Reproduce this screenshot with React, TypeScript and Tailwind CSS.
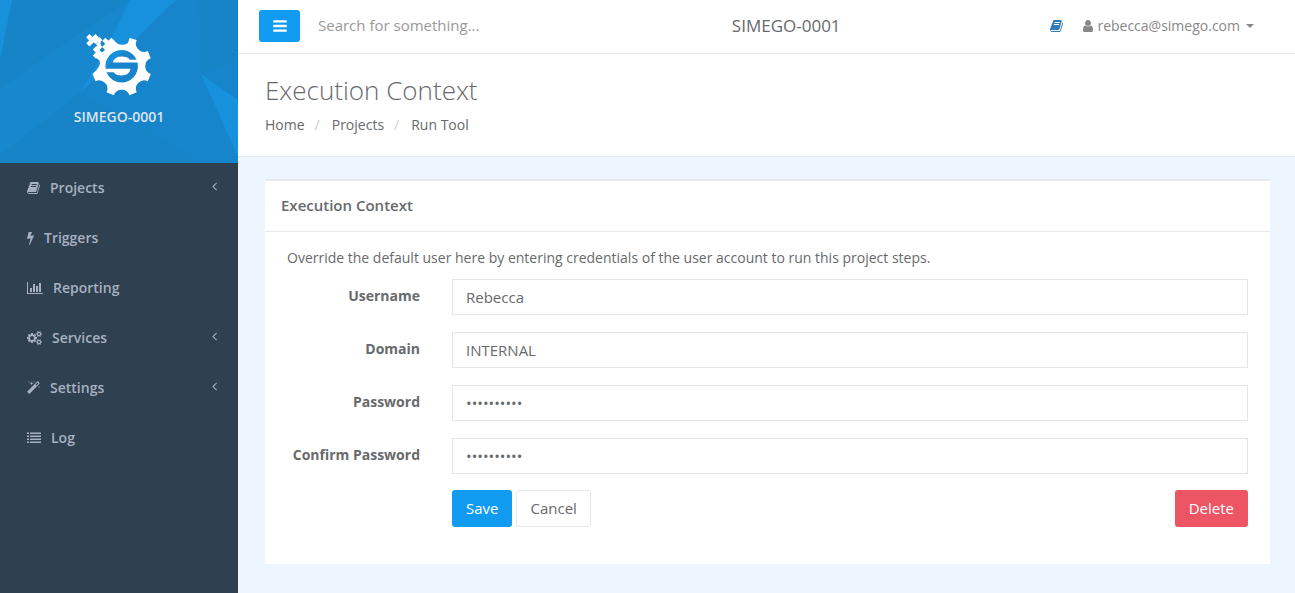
import { useState } from "react";
import type { ReactNode } from "react";

// Icon outlines, drawn on a 1792 unit grid
const BOOK =
  "M1639 478q40 57 18 129l-275 906q-19 64-76.5 107.5t-122.5 43.5h-923q-77 0-148.5-53.5t-99.5-131.5q-24-67-2-127 0-4 3-27t4-37q1-8-3-21.5t-3-19.5q2-11 8-21t16.5-23.5 16.5-23.5q23-38 45-91.5t30-91.5q3-10 .5-30t-.5-28q3-11 17-28t17-23q21-36 42-92t25-90q1-9-2.5-32t.5-28q4-13 22-30.5t22-22.5q19-26 42.5-84.5t27.5-96.5q1-8-3-25.5t-2-26.5q2-8 9-18t18-23 17-21q8-12 16.5-30.5t15-35 16-36 19.5-32 26.5-23.5 36-11.5 47.5 5.5l-1 3q38-9 51-9h761q74 0 114 56t18 130l-274 906q-36 119-71.5 153.5t-128.5 34.5h-869q-27 0-38 15-11 16-1 43 24 70 144 70h923q29 0 56-15.5t35-41.5l300-987q7-22 5-57 38 15 59 43zm-1064 2q-4 13 2 22.5t20 9.5h608q13 0 25.5-9.5t16.5-22.5l21-64q4-13-2-22.5t-20-9.5h-608q-13 0-25.5 9.5t-16.5 22.5zm-83 256q-4 13 2 22.5t20 9.5h608q13 0 25.5-9.5t16.5-22.5l21-64q4-13-2-22.5t-20-9.5h-608q-13 0-25.5 9.5t-16.5 22.5z";
const BOLT =
  "M1333 566q18 20 7 44l-540 1157q-13 25-42 25-4 0-14-2-17-5-25.5-19t-4.5-30l197-808-406 101q-4 1-12 1-18 0-31-11-18-15-13-39l201-825q4-14 16-23t28-9h328q19 0 32 12.5t13 29.5q0 8-5 18l-171 463 396-98q8-2 12-2 19 0 34 15z";
const CHART =
  "M640 896v512h-256v-512h256zm384-512v1024h-256v-1024h256zm1024 1152v128h-2048v-1536h128v1408h1920zm-640-896v768h-256v-768h256zm384-384v1152h-256v-1152h256z";
const COGS =
  "M896 896q0-106-75-181t-181-75-181 75-75 181 75 181 181 75 181-75 75-181zm768 512q0-52-38-90t-90-38-90 38-38 90q0 53 37.5 90.5t90.5 37.5 90.5-37.5 37.5-90.5zm0-1024q0-52-38-90t-90-38-90 38-38 90q0 53 37.5 90.5t90.5 37.5 90.5-37.5 37.5-90.5zm-384 421v185q0 10-7 19.5t-16 10.5l-155 24q-11 35-32 76 34 48 90 115 7 11 7 20 0 12-7 19-23 30-82.5 89.5t-78.5 59.5q-11 0-21-7l-115-90q-37 19-77 31-11 108-23 155-7 24-30 24h-186q-11 0-20-7.5t-10-17.5l-23-153q-34-10-75-31l-118 89q-7 7-20 7-11 0-21-8-144-133-144-160 0-9 7-19 10-14 41-53t47-61q-23-44-35-82l-152-24q-10-1-17-9.5t-7-19.5v-185q0-10 7-19.5t16-10.5l155-24q11-35 32-76-34-48-90-115-7-11-7-20 0-12 7-20 22-30 82-89t79-59q11 0 21 7l115 90q34-18 77-32 11-108 23-154 7-24 30-24h186q11 0 20 7.5t10 17.5l23 153q34 10 75 31l118-89q8-7 20-7 11 0 21 8 144 133 144 160 0 9-7 19-12 16-42 54t-45 60q23 48 34 82l152 23q10 2 17 10.5t7 19.5zm640 533v140q0 16-149 31-12 27-30 52 51 113 51 138 0 4-4 7-122 71-124 71-8 0-46-47t-52-68q-20 2-30 2t-30-2q-14 21-52 68t-46 47q-2 0-124-71-4-3-4-7 0-25 51-138-18-25-30-52-149-15-149-31v-140q0-16 149-31 13-29 30-52-51-113-51-138 0-4 4-7 4-2 35-20t59-34 30-16q8 0 46 46.5t52 67.5q20-2 30-2t30 2q51-71 92-112l6-2q4 0 124 70 4 3 4 7 0 25-51 138 17 23 30 52 149 15 149 31zm0-1024v140q0 16-149 31-12 27-30 52 51 113 51 138 0 4-4 7-122 71-124 71-8 0-46-47t-52-68q-20 2-30 2t-30-2q-14 21-52 68t-46 47q-2 0-124-71-4-3-4-7 0-25 51-138-18-25-30-52-149-15-149-31v-140q0-16 149-31 13-29 30-52-51-113-51-138 0-4 4-7 4-2 35-20t59-34 30-16q8 0 46 46.5t52 67.5q20-2 30-2t30 2q51-71 92-112l6-2q4 0 124 70 4 3 4 7 0 25-51 138 17 23 30 52 149 15 149 31z";
const MAGIC =
  "M1190 581l293-293-107-107-293 293zm447-293q0 27-18 45l-1286 1286q-18 18-45 18t-45-18l-198-198q-18-18-18-45t18-45l1286-1286q18-18 45-18t45 18l198 198q18 18 18 45zm-1351-190l98 30-98 30-30 98-30-98-98-30 98-30 30-98zm350 162l196 60-196 60-60 196-60-196-196-60 196-60 60-196zm930 478l98 30-98 30-30 98-30-98-98-30 98-30 30-98zm-640-640l98 30-98 30-30 98-30-98-98-30 98-30 30-98z";
const LIST =
  "M0 1344h256v192h-256zM0 960h256v192h-256zM0 576h256v192h-256zM0 192h256v192h-256zM384 1344h1408v192h-1408zM384 960h1408v192h-1408zM384 576h1408v192h-1408zM384 192h1408v192h-1408z";
const BARS =
  "M1664 1344v128q0 26-19 45t-45 19h-1408q-26 0-45-19t-19-45v-128q0-26 19-45t45-19h1408q26 0 45 19t19 45zm0-512v128q0 26-19 45t-45 19h-1408q-26 0-45-19t-19-45v-128q0-26 19-45t45-19h1408q26 0 45 19t19 45zm0-512v128q0 26-19 45t-45 19h-1408q-26 0-45-19t-19-45v-128q0-26 19-45t45-19h1408q26 0 45 19t19 45z";
const USER =
  "M1536 1399q0 109-62.5 187t-150.5 78h-854q-88 0-150.5-78t-62.5-187q0-85 8.5-160.5t31.5-152 58.5-131 94-89 134.5-34.5q131 128 313 128t313-128q76 0 134.5 34.5t94 89 58.5 131 31.5 152 8.5 160.5zm-256-887q0 159-112.5 271.5t-271.5 112.5-271.5-112.5-112.5-271.5 112.5-271.5 271.5-112.5 271.5 112.5 112.5 271.5z";
const ANGLE =
  "M1203 544q0 13-10 23l-393 393 393 393q10 10 10 23t-10 23l-50 50q-10 10-23 10t-23-10l-466-466q-10-10-10-23t10-23l466-466q10-10 23-10t23 10l50 50q10 10 10 23z";

const menu = [
  { label: "Projects", path: BOOK, box: "0 0 1664 1792", width: "w-[13px]", arrow: true },
  { label: "Triggers", path: BOLT, box: "448 0 896 1792", width: "w-[7px]", arrow: false },
  { label: "Reporting", path: CHART, box: "0 0 2048 1792", width: "w-4", arrow: false },
  { label: "Services", path: COGS, box: "0 0 1920 1792", width: "w-[15px]", arrow: true },
  { label: "Settings", path: MAGIC, box: "0 0 1664 1792", width: "w-[13px]", arrow: true },
  { label: "Log", path: LIST, box: "0 0 1792 1792", width: "w-[14px]", arrow: false },
];

function Icon({ path, box = "0 0 1792 1792", className }: { path: string; box?: string; className: string }) {
  return (
    <svg viewBox={box} className={`shrink-0 ${className}`} fill="currentColor" aria-hidden="true">
      <path d={path} />
    </svg>
  );
}

// Pixels that break away from the gear's top left corner
const PIXELS = [
  [268, 113], [286, 113], [277, 122], [268, 131], [286, 123], [297, 121], [297, 133],
  [316, 124], [334, 124], [325, 133], [343, 133], [334, 142], [316, 142],
  [288, 150], [297, 142], [288, 168], [297, 160], [316, 158], [306, 170],
];

function gearPath() {
  const point = (deg: number) => {
    const rad = (deg * Math.PI) / 180;
    return `${(365 + 91 * Math.cos(rad)).toFixed(1)} ${(200 + 91 * Math.sin(rad)).toFixed(1)}`;
  };
  // starts after the top left corner and runs clockwise
  let d = `M322 132L334 118L350 132Q365 140 384 130L${point(-75)}`;
  for (let k = -1; k <= 3; k++) {
    const mid = k * 45;
    d += `L${point(mid - 15)}A25 25 0 0 0 ${point(mid + 15)}`;
  }
  d += `L${point(165)}Q307 198 298 183L280 168L296 162L314 152Z`;
  return d.replace(`Q365 140 384 130L${point(-75)}L${point(-60)}`, `Q370 140 384 130L389 115L${point(-60)}`);
}

function Logo() {
  return (
    <svg viewBox="255 100 201 190" className="h-[63px] w-[67px]" role="img" aria-label="Simego">
      <path
        fillRule="evenodd"
        fill="#fff"
        d={`${gearPath()}M414 200A49 49 0 1 0 316 200A49 49 0 1 0 414 200Z`}
      />
      {PIXELS.map(([x, y]) => (
        <path key={`${x}-${y}`} fill="#fff" d={`M${x} ${y - 10}l10 10l-10 10l-10 -10z`} />
      ))}
      <path fill="#1785cb" d="M307 125l7 7l-7 7l-7 -7zM307 146l7 6l-7 6l-7 -6z" />
      <path fill="#fff" d="M338 189Q343 171 365 171Q383 171 390 181H412L414 189Z" />
      <path fill="#fff" d="M317 208H392Q388 228 365 228Q347 228 341 218H319Z" />
    </svg>
  );
}

function Brand() {
  return (
    <div className="relative flex h-[163px] flex-col items-center overflow-hidden bg-[#1785cb] pt-[33px]">
      <svg
        viewBox="0 0 238 163"
        preserveAspectRatio="none"
        className="absolute inset-0 h-full w-full"
        aria-hidden="true"
      >
        <path fill="#1684c7" d="M12 0H130L0 88V60zM198 0H238V60L201 74zM80 93L205 163H0V155z" />
        <path fill="#1787ce" d="M130 0L0 88V155L80 93z" />
        <path fill="#1791db" d="M0 0H12L0 60zM130 0H176L135 40L80 93L110 40zM201 74L238 100V157z" />
      </svg>
      <div className="relative flex flex-col items-center">
        <Logo />
        <span className="mt-[11px] text-sm font-semibold text-[#dfe4ed]">SIMEGO-0001</span>
      </div>
    </div>
  );
}

function Sidebar() {
  return (
    <aside className="w-[238px] shrink-0 bg-[#2f4050]">
      <Brand />
      <nav>
        <ul>
          {menu.map((item) => (
            <li key={item.label}>
              <a href="#" className="flex h-[50px] items-center pr-[21px] pl-[27px] text-sm font-semibold text-[#a7b1c2]">
                <Icon path={item.path} box={item.box} className={`h-[14px] ${item.width}`} />
                <span className="ml-[10px]">{item.label}</span>
                {item.arrow && <Icon path={ANGLE} box="576 256 640 1408" className="mb-1 ml-auto h-[11px] w-[5px]" />}
              </a>
            </li>
          ))}
        </ul>
      </nav>
    </aside>
  );
}

function TopBar() {
  return (
    <header className="flex h-[54px] items-center justify-between border-b border-[#e7eaec] bg-white pr-[41px] pb-[2px] pl-[21px]">
      <div className="flex items-center">
        <button
          type="button"
          aria-label="Toggle menu"
          className="flex h-8 w-[41px] items-center justify-center rounded-[3px] bg-[#109bf0] text-white"
        >
          <Icon path={BARS} className="h-4 w-4" />
        </button>
        <input
          type="text"
          aria-label="Search"
          placeholder="Search for something..."
          className="ml-[18px] w-[204px] text-[15px] text-[#676a6c] outline-none placeholder:text-[#999]"
        />
      </div>
      <span className="text-[17px] text-[#676a6c]">SIMEGO-0001</span>
      <div className="flex items-center">
        <a href="#" aria-label="Documentation" className="text-[#337ab7]">
          <Icon path={BOOK} box="0 0 1664 1792" className="h-[14px] w-[13px]" />
        </a>
        <button type="button" className="ml-5 flex items-center text-sm text-[#888]">
          <Icon path={USER} box="256 0 1280 1792" className="h-[14px] w-[10px]" />
          <span className="ml-1">rebecca@simego.com</span>
          <svg viewBox="0 0 8 4" className="ml-[6px] h-1 w-2" fill="currentColor" aria-hidden="true">
            <path d="M0 0h8L4 4z" />
          </svg>
        </button>
      </div>
    </header>
  );
}

function Heading() {
  return (
    <div className="border-b border-[#e7eaec] bg-white px-[27px] pt-[19px] pb-[21px]">
      <h2 className="text-[26px] leading-[34px] font-light text-[#676a6c]">Execution Context</h2>
      <ol className="mt-2 flex text-sm text-[#676a6c]">
        <li>
          <a href="#">Home</a>
        </li>
        <li>
          <span className="pr-3 pl-[10px] text-[#ccc]">/</span>
          <a href="#">Projects</a>
        </li>
        <li>
          <span className="pr-3 pl-[10px] text-[#ccc]">/</span>
          <a href="#">Run Tool</a>
        </li>
      </ol>
    </div>
  );
}

function Row({ id, label, children }: { id?: string; label?: string; children: ReactNode }) {
  return (
    <div className="flex gap-8">
      <div className="w-[133px] shrink-0 pt-1 text-right">
        {label && (
          <label htmlFor={id} className="text-sm font-bold">
            {label}
          </label>
        )}
      </div>
      <div className="flex min-w-0 flex-1">{children}</div>
    </div>
  );
}

const inputClass = "h-9 w-full border border-[#e5e6e7] bg-white px-[13px] text-[15px] text-[#676a6c] outline-none";

export default function App() {
  const [username, setUsername] = useState("Rebecca");
  const [domain, setDomain] = useState("INTERNAL");
  const [password, setPassword] = useState("abcdefghij");
  const [confirm, setConfirm] = useState("abcdefghij");

  return (
    <div className="flex min-h-screen bg-[#edf6fe] font-['Open_Sans',sans-serif] text-[#676a6c]">
      <Sidebar />
      <div className="min-w-0 flex-1">
        <TopBar />
        <Heading />

        <main className="pt-[22px] pr-[25px] pb-[29px] pl-[27px]">
          <section className="bg-white">
            <div className="border-t-2 border-b border-[#e7eaec] px-4 pt-[14px] pb-4">
              <h5 className="text-[15px] leading-5 font-semibold">Execution Context</h5>
            </div>

            <form className="px-[22px] pt-4 pb-[37px]" onSubmit={(e) => e.preventDefault()}>
              <p className="text-sm">
                Override the default user here by entering credentials of the user account to run this project steps.
              </p>
              <div className="mt-[11px] mb-4 flex flex-col gap-[17px]">
                <Row id="username" label="Username">
                  <input
                    id="username"
                    type="text"
                    value={username}
                    onChange={(e) => setUsername(e.target.value)}
                    className={inputClass}
                  />
                </Row>
                <Row id="domain" label="Domain">
                  <input
                    id="domain"
                    type="text"
                    value={domain}
                    onChange={(e) => setDomain(e.target.value)}
                    className={inputClass}
                  />
                </Row>
                <Row id="password" label="Password">
                  <input
                    id="password"
                    type="password"
                    value={password}
                    onChange={(e) => setPassword(e.target.value)}
                    className={inputClass}
                  />
                </Row>
                <Row id="confirm" label="Confirm Password">
                  <input
                    id="confirm"
                    type="password"
                    value={confirm}
                    onChange={(e) => setConfirm(e.target.value)}
                    className={inputClass}
                  />
                </Row>
              </div>
              <Row>
                <button type="submit" className="h-[37px] rounded-[3px] bg-[#109bf0] px-[14px] text-[15px] text-white">
                  Save
                </button>
                <button
                  type="button"
                  className="ml-1 h-[37px] rounded-[3px] border border-[#e7eaec] bg-white px-[13px] text-[15px]"
                >
                  Cancel
                </button>
                <button
                  type="button"
                  className="ml-auto h-[37px] rounded-[3px] bg-[#ed5565] px-[14px] text-[15px] text-white"
                >
                  Delete
                </button>
              </Row>
            </form>
          </section>
        </main>
      </div>
    </div>
  );
}
